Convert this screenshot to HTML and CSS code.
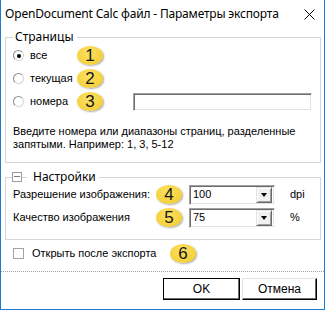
FILE: index.html
```html
<!DOCTYPE html>
<html lang="ru">
<head>
<meta charset="utf-8">
<title>Параметры экспорта</title>
<link rel="stylesheet" href="styles.css">
</head>
<body>
<div class="window">
  <div class="titlebar">
    <span class="title">OpenDocument Calc файл - Параметры экспорта</span>
    <svg class="close" width="11" height="11" viewBox="0 0 11 11"><path d="M0.5 0.5 L10.5 10.5 M10.5 0.5 L0.5 10.5" stroke="#000" stroke-width="1" fill="none"/></svg>
  </div>
  <div class="content">
    <fieldset class="group pages">
      <legend class="legend">Страницы</legend>
      <div class="opt-row">
        <span class="radio checked"></span><span class="lbl">все</span><span class="badge">1</span>
      </div>
      <div class="opt-row">
        <span class="radio"></span><span class="lbl">текущая</span><span class="badge">2</span>
      </div>
      <div class="opt-row">
        <span class="radio"></span><span class="lbl">номера</span><span class="badge">3</span><span class="textbox"></span>
      </div>
      <p class="hint">Введите номера или диапазоны страниц, разделенные<br>запятыми. Например: 1, 3, 5-12</p>
    </fieldset>
    <fieldset class="group settings">
      <legend class="legend legend-collapse"><span class="expander"></span><span class="stub"></span><span class="legend-text">Настройки</span></legend>
      <div class="set-row">
        <span class="lbl">Разрешение изображения:</span><span class="badge">4</span>
        <div class="combo"><span class="combo-val">100</span><span class="drop"><span class="tri"></span></span></div>
        <span class="unit">dpi</span>
      </div>
      <div class="set-row">
        <span class="lbl">Качество изображения</span><span class="badge">5</span>
        <div class="combo"><span class="combo-val">75</span><span class="drop"><span class="tri"></span></span></div>
        <span class="unit">%</span>
      </div>
    </fieldset>
    <div class="check-row">
      <span class="checkbox"></span><span class="lbl">Открыть после экспорта</span><span class="badge">6</span>
    </div>
  </div>
  <div class="sep"></div>
  <div class="buttons">
    <button class="btn btn-default">OK</button>
    <button class="btn">Отмена</button>
  </div>
</div>
</body>
</html>
```
FILE: styles.css
```css
html, body {
  margin: 0;
  padding: 0;
  background: #ffffff;
}

body {
  font-family: "Liberation Sans", Arial, sans-serif;
  font-size: 11px;
  color: #000;
}

.window {
  width: 325px;
  height: 310px;
  box-sizing: border-box;
  border: 1px solid #1d79d3;
  border-top: none;
  background: #fff;
  display: flex;
  flex-direction: column;
}

.titlebar {
  height: 30px;
  box-sizing: border-box;
  padding: 6px 9px 0 4px;
  display: flex;
  align-items: flex-start;
  flex-shrink: 0;
}

.title {
  font-family: "Noto Sans", "Open Sans", sans-serif;
  font-size: 12px;
  line-height: 16px;
  letter-spacing: -0.18px;
  color: #000;
  white-space: nowrap;
}

.close {
  margin-left: auto;
  margin-top: 3px;
  display: block;
}

.content {
  display: flex;
  flex-direction: column;
}

.group {
  margin: 0 3px 0 4px;
  padding: 0 6px 11px 7px;
  border: 1px solid #d5d5d5;
  min-width: 0;
}

.legend {
  font-family: "Noto Sans", "Open Sans", sans-serif;
  font-size: 12px;
  line-height: 14px;
  padding: 0 3px 0 2px;
  margin: 0;
}

.legend-collapse {
  display: flex;
  align-items: center;
  margin-left: -1px;
  padding: 0 3px 0 0;
}

.expander {
  width: 10px;
  height: 10px;
  box-sizing: border-box;
  border: 1px solid #9a9a9a;
  position: relative;
  display: inline-block;
}

.expander::after {
  content: "";
  position: absolute;
  left: 1px;
  right: 1px;
  top: 3px;
  height: 1px;
  background: #7a7a7a;
}

.stub {
  width: 5px;
  height: 1px;
  background: #d5d5d5;
  margin-right: 6px;
  display: inline-block;
}

.opt-row {
  display: grid;
  grid-template-columns: 17px 47px 26px auto;
  align-items: center;
  height: 23px;
}

.radio {
  width: 11px;
  height: 11px;
  box-sizing: border-box;
  border-radius: 50%;
  border: 1px solid;
  border-color: #8d8d8d #d6d6d6 #d6d6d6 #8d8d8d;
  background: #fff;
  position: relative;
}

.radio.checked::after {
  content: "";
  position: absolute;
  left: 2.5px;
  top: 2.5px;
  width: 4px;
  height: 4px;
  border-radius: 50%;
  background: #000;
}

.lbl {
  white-space: nowrap;
  line-height: 13px;
}

.badge {
  width: 26px;
  height: 19px;
  border-radius: 50%;
  background: radial-gradient(ellipse at 45% 35%, #fbe063 0%, #f6d33f 60%, #e8c22e 100%);
  box-shadow: 1px 1px 2px rgba(0, 0, 0, 0.35);
  font-family: "Liberation Sans", Arial, sans-serif;
  font-size: 17px;
  line-height: 19px;
  text-align: center;
  color: #151515;
}

.textbox {
  margin-left: 30px;
  width: 179px;
  height: 18px;
  box-sizing: border-box;
  border: 1px solid;
  border-color: #a0a0a0 #ffffff #ffffff #a0a0a0;
  box-shadow: inset 1px 1px 0 #6d6d6d, inset -1px -1px 0 #e3e3e3;
  background: #fff;
}

.hint {
  margin: 12px 0 0 0;
  line-height: 13px;
  white-space: nowrap;
}

.settings {
  margin-top: 7px;
}

.set-row {
  display: grid;
  grid-template-columns: 143px 33px 86px auto;
  align-items: center;
  height: 21px;
}

.set-row + .set-row {
  margin-top: 2px;
}

.combo {
  height: 20px;
  box-sizing: border-box;
  border: 1px solid;
  border-color: #a0a0a0 #ffffff #ffffff #a0a0a0;
  box-shadow: inset 1px 1px 0 #6d6d6d, inset -1px -1px 0 #e3e3e3;
  background: #fff;
  display: flex;
  align-items: center;
  padding: 2px 2px 2px 3px;
}

.combo-val {
  flex: 1;
  line-height: 13px;
}

.drop {
  width: 16px;
  height: 16px;
  box-sizing: border-box;
  border: 1px solid;
  border-color: #e3e3e3 #696969 #696969 #e3e3e3;
  box-shadow: inset 1px 1px 0 #fff, inset -1px -1px 0 #a0a0a0;
  background: #f0f0f0;
  display: flex;
  align-items: center;
  justify-content: center;
}

.tri {
  width: 0;
  height: 0;
  border-left: 3.5px solid transparent;
  border-right: 3.5px solid transparent;
  border-top: 4px solid #000;
}

.unit {
  padding-left: 15px;
  line-height: 13px;
}

.check-row {
  display: grid;
  grid-template-columns: 19px 138px 26px;
  align-items: center;
  height: 20px;
  margin: 3px 0 0 12px;
}

.checkbox {
  width: 11px;
  height: 11px;
  box-sizing: border-box;
  border: 1px solid #a3a3a3;
  background: #fff;
}

.sep {
  margin-top: 8px;
  border-top: 1px dotted #a0a0a0;
}

.buttons {
  display: flex;
  justify-content: flex-end;
  gap: 2px;
  padding: 6px 7px 0 0;
}

.btn {
  font-family: "Liberation Sans", Arial, sans-serif;
  font-size: 12px;
  height: 22px;
  width: 75px;
  box-sizing: border-box;
  margin: 0;
  padding: 0;
  background: #fff;
  color: #000;
  border: 1px solid;
  border-color: #e3e3e3 #000 #000 #e3e3e3;
  box-shadow: inset -1px -1px 0 #6d6d6d;
}

.btn-default {
  width: 77px;
  border-color: #000;
  box-shadow: inset -1px -1px 0 #6d6d6d, inset 1px 1px 0 #fff;
}
```
